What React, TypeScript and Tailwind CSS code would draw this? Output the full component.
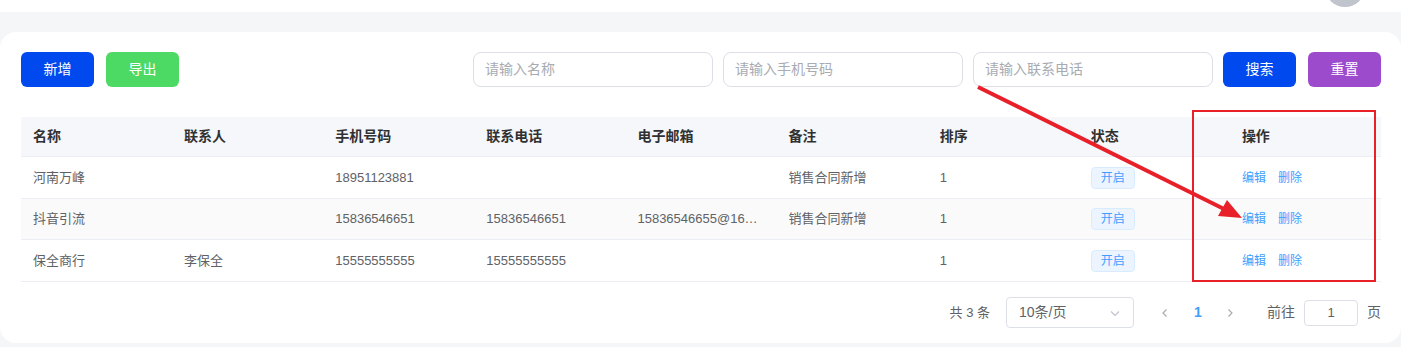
import React from "react";

const font = { fontFamily: '"Liberation Sans", "Noto Sans CJK SC", sans-serif' };

const headers = ["名称", "联系人", "手机号码", "联系电话", "电子邮箱", "备注", "排序", "状态", "操作"];

const rows = [
  { name: "河南万峰", contact: "", mobile: "18951123881", phone: "", email: "", remark: "销售合同新增", sort: "1", h: "h-[42px]" },
  { name: "抖音引流", contact: "", mobile: "15836546651", phone: "15836546651", email: "15836546655@16…", remark: "销售合同新增", sort: "1", h: "h-[41px]" },
  { name: "保全商行", contact: "李保全", mobile: "15555555555", phone: "15555555555", email: "", remark: "", sort: "1", h: "h-[42px]" },
];

function Cell({ children }: { children?: React.ReactNode }) {
  return <div className="px-3 flex items-center min-w-0 truncate whitespace-nowrap">{children}</div>;
}

export default function App() {
  return (
    <div className="relative w-[1401px] h-[347px] bg-[#f5f6f8] overflow-hidden text-[#606266]" style={font}>
      {/* top bar */}
      <div className="h-[12px] bg-white flex justify-end pr-[36px] overflow-hidden">
        <div className="w-10 h-10 rounded-full bg-[#c0c4cc] -mt-[33px] shrink-0" />
      </div>

      {/* card */}
      <div className="mt-[20px] bg-white rounded-[16px] pl-[21px] pr-[20px] pt-[20px] pb-[15px]">
        {/* toolbar */}
        <div className="flex items-center h-[35px]">
          <button className="w-[73px] h-[35px] rounded-[6px] bg-[#0049ee] text-white text-[14px]">新增</button>
          <button className="ml-[12px] w-[73px] h-[35px] rounded-[6px] bg-[#4cd964] text-white text-[14px]">导出</button>
          <div className="flex-1" />
          <div className="flex items-center gap-[10px]">
            {["请输入名称", "请输入手机号码", "请输入联系电话"].map((p) => (
              <div key={p} className="w-[240px] h-[35px] rounded-[8px] border border-[#dcdfe6] flex items-center pl-[11px] text-[14px] text-[#a8abb2]">
                {p}
              </div>
            ))}
            <button className="w-[73px] h-[35px] rounded-[6px] bg-[#0049ee] text-white text-[14px]">搜索</button>
            <button className="ml-[2px] w-[73px] h-[35px] rounded-[6px] bg-[#9b4bcc] text-white text-[14px]">重置</button>
          </div>
        </div>

        {/* table */}
        <div className="mt-[30px]">
          <div className="grid grid-cols-9 h-[40px] bg-[#f5f7fa] border-b border-[#ebeef5] text-[14px] font-bold text-[#303133]">
            {headers.map((h) => (
              <Cell key={h}>{h}</Cell>
            ))}
          </div>
          {rows.map((r, i) => (
            <div
              key={r.name}
              className={`grid grid-cols-9 ${r.h} border-b border-[#ebeef5] text-[13px] text-[#606266] ${i === 1 ? "bg-[#fafafa]" : "bg-white"}`}
            >
              <Cell>{r.name}</Cell>
              <Cell>{r.contact}</Cell>
              <Cell>{r.mobile}</Cell>
              <Cell>{r.phone}</Cell>
              <Cell>{r.email}</Cell>
              <Cell>{r.remark}</Cell>
              <Cell>{r.sort}</Cell>
              <Cell>
                <span className="h-[22px] w-[44px] flex items-center justify-center rounded-[4px] bg-[#ecf5ff] border border-[#d9ecff] text-[#409eff] text-[12px]">
                  开启
                </span>
              </Cell>
              <Cell>
                <span className="text-[12px] text-[#409eff]">编辑</span>
                <span className="ml-[12px] text-[12px] text-[#409eff]">删除</span>
              </Cell>
            </div>
          ))}
        </div>

        {/* pagination */}
        <div className="mt-[15px] flex items-center justify-end h-[31px] text-[13px] text-[#606266]">
          <span>共 3 条</span>
          <div className="ml-[16px] w-[128px] h-[31px] rounded-[4px] border border-[#dcdfe6] flex items-center justify-between pl-[12px] pr-[12px] text-[14px] text-[#606266]">
            <span>10条/页</span>
            <svg width="12" height="12" viewBox="0 0 12 12" fill="none" stroke="#c0c4cc" strokeWidth="1.2">
              <path d="M2 4.5 L6 8.5 L10 4.5" />
            </svg>
          </div>
          <div className="ml-[16px] flex items-center">
            <div className="w-[30px] h-[28px] flex items-center justify-center">
              <svg width="10" height="10" viewBox="0 0 10 10" fill="none" stroke="#a8abb2" strokeWidth="1.2">
                <path d="M6.5 1.5 L3 5 L6.5 8.5" />
              </svg>
            </div>
            <div className="ml-[3px] w-[30px] h-[28px] flex items-center justify-center text-[14px] font-bold text-[#409eff]">1</div>
            <div className="ml-[2px] w-[30px] h-[28px] flex items-center justify-center">
              <svg width="10" height="10" viewBox="0 0 10 10" fill="none" stroke="#a8abb2" strokeWidth="1.2">
                <path d="M3.5 1.5 L7 5 L3.5 8.5" />
              </svg>
            </div>
          </div>
          <span className="ml-[22px] text-[14px]">前往</span>
          <div className="ml-[9px] w-[54px] h-[26px] rounded-[4px] border border-[#dcdfe6] flex items-center justify-center text-[13px]">1</div>
          <span className="ml-[9px] text-[14px]">页</span>
        </div>
      </div>

      {/* annotation overlay */}
      <svg className="absolute top-0 left-0 pointer-events-none" width="1401" height="347" viewBox="0 0 1401 347">
        <rect x="1193" y="111" width="182" height="170" fill="none" stroke="#e8202a" strokeWidth="2" />
        <line x1="978" y1="87" x2="1224" y2="209" stroke="#e8202a" strokeWidth="4" />
        <polygon points="1242,218 1218,216 1227,200" fill="#e8202a" />
      </svg>
    </div>
  );
}
